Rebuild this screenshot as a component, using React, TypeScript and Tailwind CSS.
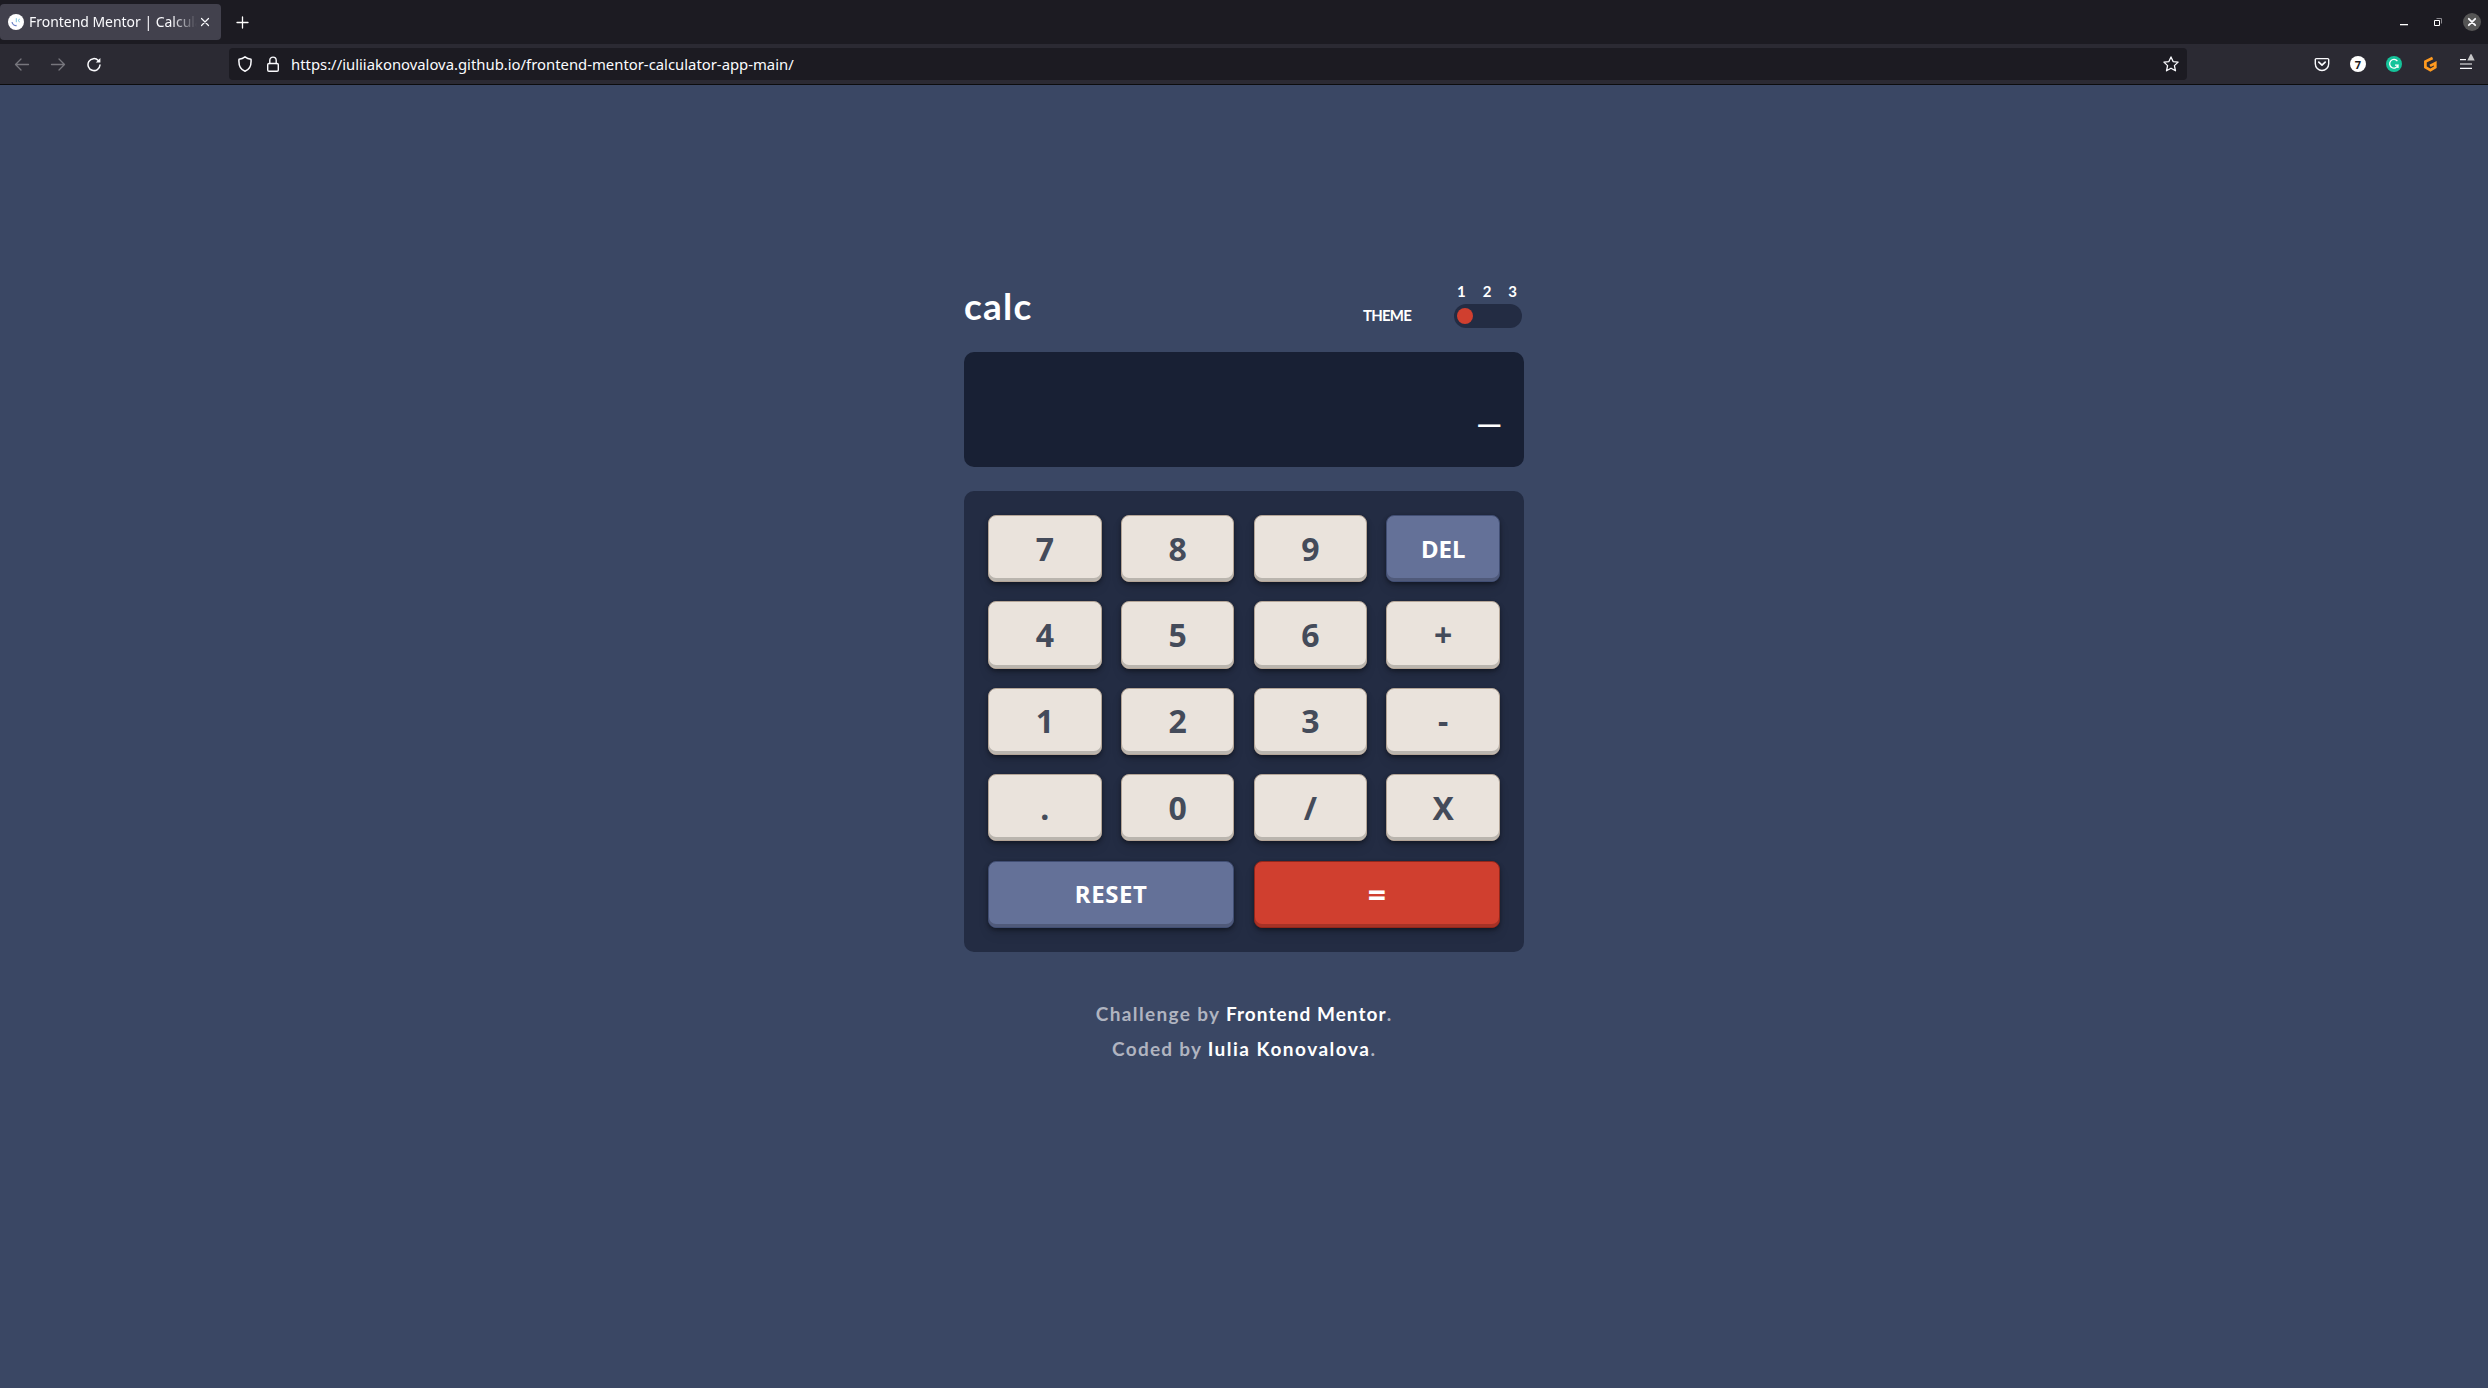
import type { ReactNode } from "react";

const keys = ["7", "8", "9", "DEL", "4", "5", "6", "+", "1", "2", "3", "-", ".", "0", "/", "X"];

const keyBase =
  "flex h-[67.2px] items-center justify-center rounded-lg border leading-none font-bold";
const plain =
  "border-[#b4a597] bg-[#eae3dc] text-[32px] text-[#444b5a] shadow-[0_2px_4px_rgba(0,0,0,0.4),0_7px_13px_-3px_rgba(0,0,0,0.15),inset_0_-3px_0_#bab5ae]";
const blue =
  "border-[#414e73] bg-[#647198] text-2xl text-white shadow-[0_2px_4px_rgba(0,0,0,0.4),0_7px_13px_-3px_rgba(0,0,0,0.15),inset_0_-3px_0_#505a7a]";
const red =
  "border-[#93261a] bg-[#d03f2f] pt-0.5 text-[32px] text-white shadow-[0_2px_4px_rgba(0,0,0,0.4),0_7px_13px_-3px_rgba(0,0,0,0.15),inset_0_-3px_0_#a63226]";

function Icon({ className = "", children, w = 1.3 }: { className?: string; children: ReactNode; w?: number }) {
  return (
    <svg
      viewBox="0 0 16 16"
      className={`size-4 shrink-0 ${className}`}
      fill="none"
      stroke="currentColor"
      strokeWidth={w}
      strokeLinecap="round"
      strokeLinejoin="round"
    >
      {children}
    </svg>
  );
}

function TabBar() {
  return (
    <div className="flex h-11 items-center bg-[#1c1b22] text-[#fbfbfe]">
      <div className="flex h-9 w-[221px] items-center rounded-[4px] bg-[#42414d] pr-2 pl-2">
        <svg viewBox="0 0 16 16" className="size-4 shrink-0">
          <circle cx="8" cy="8" r="8" fill="#fff" />
          <path d="M4 8.2c.4 2 2.5 3.6 4.6 3.3" fill="none" stroke="#6a7fc4" strokeWidth="1.3" />
          <path d="M8.3 4.2v4M10 6.5l1.8-1.5M10 6.5l1.8 1.5" fill="none" stroke="#7cc4dc" strokeWidth="1" />
        </svg>
        <div className="ml-[5px] w-[168px] min-w-0 shrink-0 mask-r-from-85% mask-r-to-100% text-[13.95px] leading-5 whitespace-nowrap">
          Frontend Mentor | Calcula
        </div>
        <Icon w={1.2}>
          <path d="M4.5 4.5l7 7M11.5 4.5l-7 7" />
        </Icon>
      </div>
      <Icon className="ml-[13px] text-white" w={1.3}>
        <path d="M8.5 3v11M3 8.5h11" />
      </Icon>
      <div className="ml-auto flex items-center pr-[7px]">
        <svg viewBox="0 0 8 2" className="mt-1.5 h-[2px] w-2">
          <path d="M0 0h8v1.3H0z" fill="#fff" />
        </svg>
        <svg viewBox="0 0 8 8" className="ml-[26px] size-2" fill="none">
          <path d="M2.5 .5h5v5" stroke="#8a898e" />
          <path d="M.5 2.5h5v5H.5z" stroke="#fff" />
        </svg>
        <div className="ml-[21px] flex size-[18px] items-center justify-center rounded-full bg-[#555555]">
          <Icon w={1.8}>
            <path d="M4.8 4.8l6.4 6.4M11.2 4.8l-6.4 6.4" />
          </Icon>
        </div>
      </div>
    </div>
  );
}

function NavBar() {
  return (
    <div className="flex h-[41px] items-center border-b border-[#0c0c0d] bg-[#2b2a33] pl-3.5 text-[#fbfbfe]">
      <Icon className="text-[#77767d]">
        <path d="M14.5 8.5h-13M7 3L1.5 8.5 7 14" />
      </Icon>
      <Icon className="ml-5 text-[#77767d]">
        <path d="M1.5 8.5h13M9 3l5.5 5.5L9 14" />
      </Icon>
      <Icon className="ml-5" w={1.5}>
        <path d="M14 9a6 6 0 1 1-1.7-4.6" />
        <path d="M14.4 2v4.5H9.8z" fill="currentColor" stroke="none" />
      </Icon>
      <div className="ml-[127px] flex h-8 w-[1958px] items-center rounded-[4px] bg-[#1c1b22] pr-2 pl-2">
        <Icon w={1.5}>
          <path d="M8 .8C9.7 2.1 11.7 2.9 14 3.2 14.5 8.5 12.8 13.5 8 15.3 3.2 13.5 1.5 8.5 2 3.2 4.3 2.9 6.3 2.1 8 .8z" />
        </Icon>
        <Icon className="ml-3" w={1.4}>
          <path d="M4.8 7.5V4.3a3.2 3.2 0 0 1 6.4 0v3.2" />
          <rect x="2.7" y="7.5" width="10.6" height="7.7" rx="1.3" />
        </Icon>
        <div className="ml-2.5 text-[14.85px] leading-none">
          https://iuliiakonovalova.github.io/frontend-mentor-calculator-app-main/
        </div>
        <Icon className="ml-auto" w={1.3}>
          <path d="M8 .9l2.1 4.7 5 .5-3.7 3.5 1.1 5.2L8 12.2l-4.5 2.6 1.1-5.2L.9 6.1l5-.5z" />
        </Icon>
      </div>
      <div className="ml-auto flex items-center gap-5 pr-3.5">
        <Icon w={1.4}>
          <path d="M2.3 2.6h11.4c.6 0 1 .4 1 1v4.2a6.7 6.7 0 0 1-13.4 0V3.6c0-.6.4-1 1-1z" />
          <path d="M4.8 6.2l3.2 3 3.2-3" strokeWidth="1.7" />
        </Icon>
        <div className="flex size-4 items-center justify-center rounded-full bg-white text-[11px] leading-none font-bold text-[#1c1b22]">
          7
        </div>
        <svg viewBox="0 0 16 16" className="size-4" fill="none" stroke="#fff" strokeWidth="1.3">
          <circle cx="8" cy="8" r="8" fill="#15c39a" stroke="none" />
          <path d="M11.4 5.2A4.3 4.3 0 1 0 12 9.2H9M12 9.2v2.8" />
        </svg>
        <svg viewBox="0 0 16 16" className="size-4" fill="none" stroke="#ff9a1f" strokeWidth="2.7">
          <path d="M10.6 2L3.4 5.6v5.6l5 2.9 4.9-2.9V7.2L8 9.9" />
        </svg>
        <svg viewBox="0 0 16 16" className="size-4 overflow-visible">
          <path d="M2 3h6v1.200H2zM2 7.400h12v1.200H2zM2 11.800h12V13H2z" fill="#fbfbfe" />
          <path d="M9.300 4.600l3-6c.4-.8 1-.8 1.400 0l3 6z" fill="#c4c4c6" />
        </svg>
      </div>
    </div>
  );
}

export default function App() {
  return (
    <div className="flex h-[1388px] flex-col overflow-hidden bg-[#3a4764] font-['Noto_Sans',sans-serif]">
      <TabBar />
      <NavBar />
      <main className="mx-auto mt-[197px] w-[560px]">
        <header className="flex h-[46px] items-end justify-between font-['Lato',sans-serif] font-bold text-white">
          <h1 className="pb-1 text-[37px] leading-none tracking-[1.2px]">calc</h1>
          <div className="flex items-end pr-0.5">
            <span className="mr-[43px] pb-[5px] text-[15px] leading-none tracking-[-0.8px]">THEME</span>
            <div className="w-[68px]">
              <div className="mb-[5px] flex justify-between pr-[5px] pl-[3px] text-[15px] leading-none">
                <span>1</span>
                <span>2</span>
                <span>3</span>
              </div>
              <div className="flex h-6 items-center rounded-full bg-[#232c43] px-[3px]">
                <div className="size-4 rounded-full bg-[#d03f2f]" />
              </div>
            </div>
          </div>
        </header>
        <div className="mt-6 flex h-[115px] items-end justify-end rounded-[10px] bg-[#182034] px-6 pb-[42px] font-['Liberation_Sans',sans-serif] text-[38px] leading-none text-white">
          _
        </div>
        <div className="mt-6 grid grid-cols-4 gap-[19.2px] rounded-[10px] bg-[#232c43] p-6">
          {keys.map((k) => (
            <button key={k} className={`${keyBase} ${k === "DEL" ? blue : plain}`}>
              {k}
            </button>
          ))}
          <button className={`${keyBase} col-span-2 tracking-[0.6px] ${blue}`}>RESET</button>
          <button className={`${keyBase} col-span-2 ${red}`}>=</button>
        </div>
        <footer className="mt-11 pr-px text-center font-['Lato',sans-serif] text-[19px] leading-[35px] font-bold text-[#b0b4c0]">
          <p>
            <span className="tracking-[1.35px]">Challenge by </span>
            <span className="tracking-[1.05px] text-white">Frontend Mentor</span>.
          </p>
          <p>
            <span className="tracking-[1.25px]">Coded by </span>
            <span className="tracking-[1.5px] text-white">Iulia Konovalova</span>.
          </p>
        </footer>
      </main>
    </div>
  );
}
